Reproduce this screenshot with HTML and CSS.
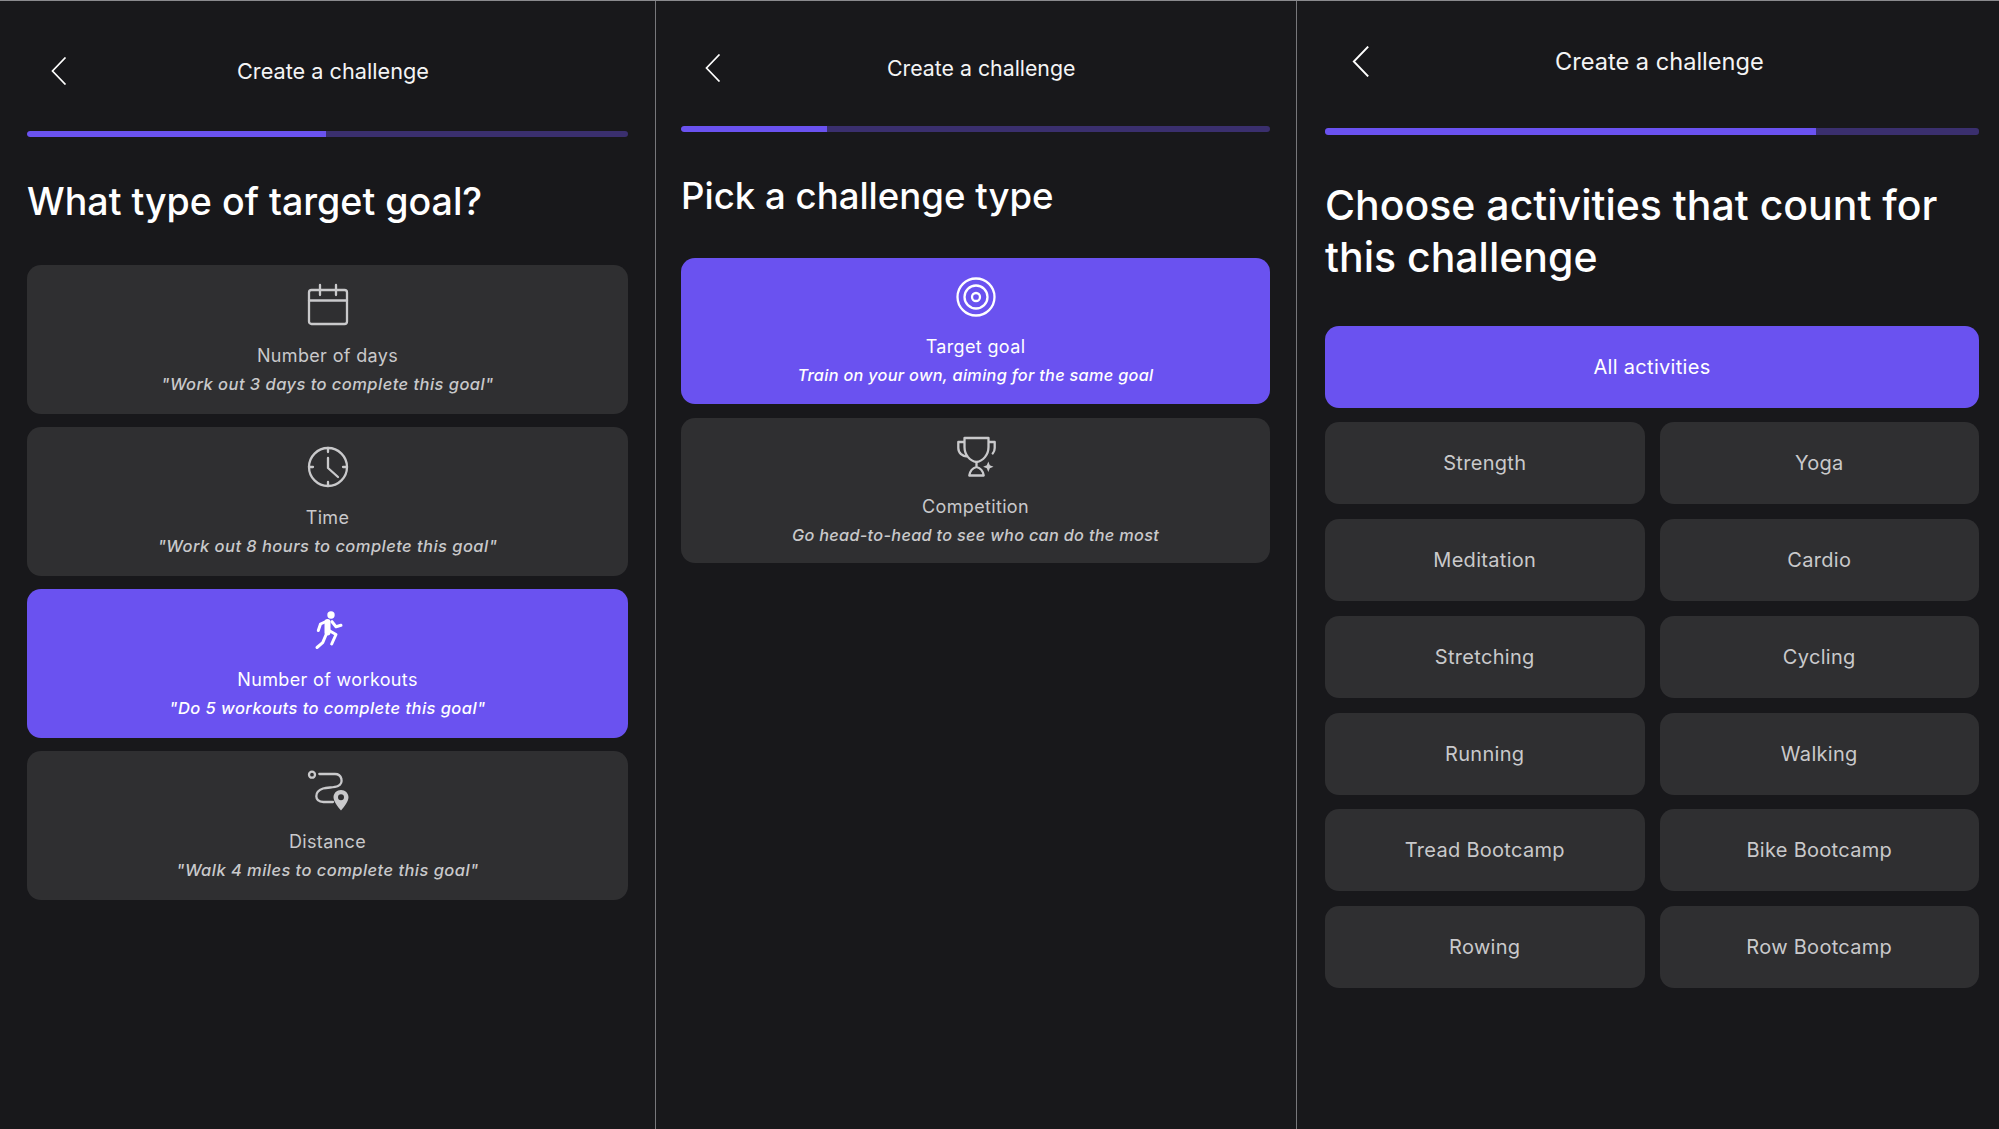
FILE: index.html
```html
<!DOCTYPE html>
<html lang="en">
<head>
<meta charset="UTF-8">
<meta name="viewport" content="width=device-width, initial-scale=1.0">
<title>Create a challenge</title>
<link rel="stylesheet" href="styles.css">
</head>
<body>
<div class="screens">

  <section class="panel panelGoal">
    <header class="topBar">
      <svg class="backIcon" viewBox="0 0 16 28"><path d="M14.500.5 1.500 14l13 13.500"/></svg>
      <span class="topTitle">Create a challenge</span>
    </header>
    <div class="track"><div class="fill" style="width: 49.8%"></div></div>
    <h1 class="heading">What type of target goal?</h1>
    <div class="cards">
      <div class="card">
        <svg class="icon" viewBox="0 0 40 40"><rect x="1" y="5" width="38" height="34" rx="2.5"/><path d="M1 15.5h38M12 0v10M28 0v10"/></svg>
        <div class="cardLabel">Number of days</div>
        <div class="cardNote">"Work out 3 days to complete this goal"</div>
      </div>
      <div class="card">
        <svg class="icon" viewBox="0 0 40 40"><circle cx="20" cy="20" r="19"/><path d="M20 1v4M20 35v4M1 20h4M35 20h4M20 11v10l10 9"/></svg>
        <div class="cardLabel">Time</div>
        <div class="cardNote">"Work out 8 hours to complete this goal"</div>
      </div>
      <div class="card active">
        <svg class="icon" viewBox="0 0 40 40"><circle class="solid" cx="23" cy="6" r="3.7"/><path class="thick" d="M19.5 13 19.5 23.5"/><path class="medium" d="M19 23.5 14.7 33.7 9 38.5M21 21.5l7 4-4.3 9.5M24 12.7l4 5 5-1.4M18 12.5l-5.5 2.5-2.2 6.5"/></svg>
        <div class="cardLabel">Number of workouts</div>
        <div class="cardNote">"Do 5 workouts to complete this goal"</div>
      </div>
      <div class="card">
        <svg class="icon" viewBox="0 0 40 40"><circle cx="4" cy="3.7" r="3"/><path d="M11.3 3H27c7 0 9 9 3 12-4 2-10 1-15 2.500-9 3-9 13 .500 13.500H25"/><path class="solid" fill-rule="evenodd" d="M33 19c-4.200 0-7.500 3.200-7.500 7.200 0 4 4.300 9.700 7.500 13.300 3.200-3.600 7.500-9.300 7.500-13.300 0-4-3.300-7.200-7.500-7.200Zm0 4.200a3 3 0 1 1 0 6 3 3 0 0 1 0-6Z"/></svg>
        <div class="cardLabel">Distance</div>
        <div class="cardNote">"Walk 4 miles to complete this goal"</div>
      </div>
    </div>
  </section>

  <section class="panel panelType">
    <header class="topBar">
      <svg class="backIcon" viewBox="0 0 16 28"><path d="M14.500.5 1.500 14l13 13.500"/></svg>
      <span class="topTitle">Create a challenge</span>
    </header>
    <div class="track"><div class="fill" style="width: 24.8%"></div></div>
    <h1 class="heading">Pick a challenge type</h1>
    <div class="cards">
      <div class="card active">
        <svg class="icon" viewBox="0 0 40 40"><circle cx="20" cy="20" r="18.500"/><circle cx="20" cy="20" r="11.500"/><circle cx="20" cy="20" r="4"/></svg>
        <div class="cardLabel">Target goal</div>
        <div class="cardNote">Train on your own, aiming for the same goal</div>
      </div>
      <div class="card">
        <svg class="icon" viewBox="0 0 40 40"><path d="M8.500 1h24v9c0 8-5.500 14-12 15-6.500-1-12-7-12-15ZM8.500 5H2.300v6c0 5 4 8.500 9.400 8.700M32.500 5h6.200v6c0 2-.6 4-2 5.500M20.500 25v5M20.500 30c-4 1-6.500 4-7.200 8.500h14.400c-.7-4.500-3.200-7.500-7.200-8.500Z"/><path class="solid" d="m32.300 24.500 1.500 3.700 3.700 1.500-3.700 1.500-1.500 3.700-1.500-3.700-3.700-1.500 3.700-1.500Z"/></svg>
        <div class="cardLabel">Competition</div>
        <div class="cardNote">Go head-to-head to see who can do the most</div>
      </div>
    </div>
  </section>

  <section class="panel panelActivity">
    <header class="topBar">
      <svg class="backIcon" viewBox="0 0 16 28"><path d="M14.500.5 1.500 14l13 13.500"/></svg>
      <span class="topTitle">Create a challenge</span>
    </header>
    <div class="track"><div class="fill" style="width: 75%"></div></div>
    <h1 class="heading">Choose activities that count for this challenge</h1>
    <div class="activityGrid">
      <div class="activity wide active">All activities</div>
      <div class="activity">Strength</div>
      <div class="activity">Yoga</div>
      <div class="activity">Meditation</div>
      <div class="activity">Cardio</div>
      <div class="activity">Stretching</div>
      <div class="activity">Cycling</div>
      <div class="activity">Running</div>
      <div class="activity">Walking</div>
      <div class="activity">Tread Bootcamp</div>
      <div class="activity">Bike Bootcamp</div>
      <div class="activity">Rowing</div>
      <div class="activity">Row Bootcamp</div>
    </div>
  </section>

</div>
</body>
</html>
```
FILE: styles.css
```css
body {
  margin: 0;
  height: 100vh;
  overflow: hidden;
  background: #18181b;
  font-family: "Inter", "Liberation Sans", sans-serif;
  color: #fff;
}

.screens {
  display: flex;
  height: 100%;
  box-sizing: border-box;
  border-top: 1px solid #8a8a8e;
}

.panel {
  display: flex;
  flex-direction: column;
  box-sizing: border-box;
}

.panel + .panel {
  border-left: 1px solid #77777b;
}

.panelGoal {
  width: 655px;
  padding: 0 27px;
}

.panelType {
  width: 641px;
  padding: 0 26px 0 25px;
}

.panelActivity {
  width: 703px;
  padding: 0 20px 0 28px;
}

/* top bar */
.topBar {
  display: flex;
  align-items: center;
}

.backIcon {
  width: 16px;
  height: 28px;
  fill: none;
  stroke: #fff;
  stroke-width: 1.700;
}

.topTitle {
  font-size: 21.700px;
  line-height: 28px;
  color: #f4f4f5;
}

.panelGoal .topBar { padding: 56px 0 0 24px; }
.panelGoal .topTitle { margin-left: 170px; }
.panelType .topBar { padding: 53px 0 0 24px; }
.panelType .topTitle { margin-left: 166px; font-size: 21.300px; }
.panelActivity .topBar { padding: 45px 0 0 27px; }
.panelActivity .topTitle { margin-left: 185px; font-size: 23.600px; }
.panelActivity .backIcon { width: 18px; height: 31px; }

/* progress */
.track {
  height: 6px;
  border-radius: 3px;
  background: #3a2f6e;
  overflow: hidden;
}

.fill {
  height: 100%;
  background: #6a52f0;
  border-radius: 3px 0 0 3px;
}

.panelGoal .track { margin-top: 46px; }
.panelType .track { margin-top: 44px; }
.panelActivity .track { margin-top: 51px; height: 6.500px; }

/* headings */
.heading {
  margin: 0;
  font-size: 37.600px;
  font-weight: 500;
  line-height: 52px;
  color: #fff;
}

.panelGoal .heading { margin-top: 39px; }
.panelType .heading { margin-top: 38px; font-size: 36.600px; }
.panelActivity .heading { margin-top: 44px; font-size: 41px; }

/* option cards */
.cards {
  display: flex;
  flex-direction: column;
}

.panelGoal .cards { margin-top: 37px; gap: 13px; }
.panelType .cards { margin-top: 36px; gap: 14px; }

.card {
  display: flex;
  flex-direction: column;
  align-items: center;
  box-sizing: border-box;
  height: 149px;
  padding-top: 20px;
  border-radius: 14px;
  background: #2f2f31;
  color: #c9c9cb;
}

.panelType .card {
  height: 145.500px;
  padding-top: 19px;
}

.card.active {
  background: #6a52f0;
  color: #fff;
}

.icon {
  width: 40px;
  height: 40px;
  fill: none;
  stroke: currentColor;
  stroke-width: 2.300;
  stroke-linecap: round;
  stroke-linejoin: round;
  overflow: visible;
}

.icon .solid {
  fill: currentColor;
  stroke: none;
}

.icon .thick {
  stroke-width: 6;
}

.icon .medium {
  stroke-width: 3;
}

.cardLabel {
  margin-top: 20px;
  font-size: 18px;
  line-height: 22px;
  letter-spacing: 0.35px;
}

.panelType .cardLabel {
  margin-top: 19px;
}

.cardNote {
  margin-top: 6px;
  font-size: 16.500px;
  line-height: 22px;
  font-style: italic;
  font-weight: 500;
  letter-spacing: 0.45px;
}

.panelType .cardNote {
  font-size: 16.300px;
  letter-spacing: 0.3px;
}

/* activity grid */
.activityGrid {
  display: grid;
  grid-template-columns: 1fr 1fr;
  grid-auto-rows: 82px;
  gap: 14.750px 15px;
  margin-top: 43px;
}

.activity {
  display: flex;
  align-items: center;
  justify-content: center;
  border-radius: 14px;
  background: #2f2f31;
  color: #c9c9cb;
  font-size: 20px;
  letter-spacing: 0.3px;
}

.activity.wide {
  grid-column: 1 / -1;
}

.activity.active {
  background: #6a52f0;
  color: #fff;
}
```
